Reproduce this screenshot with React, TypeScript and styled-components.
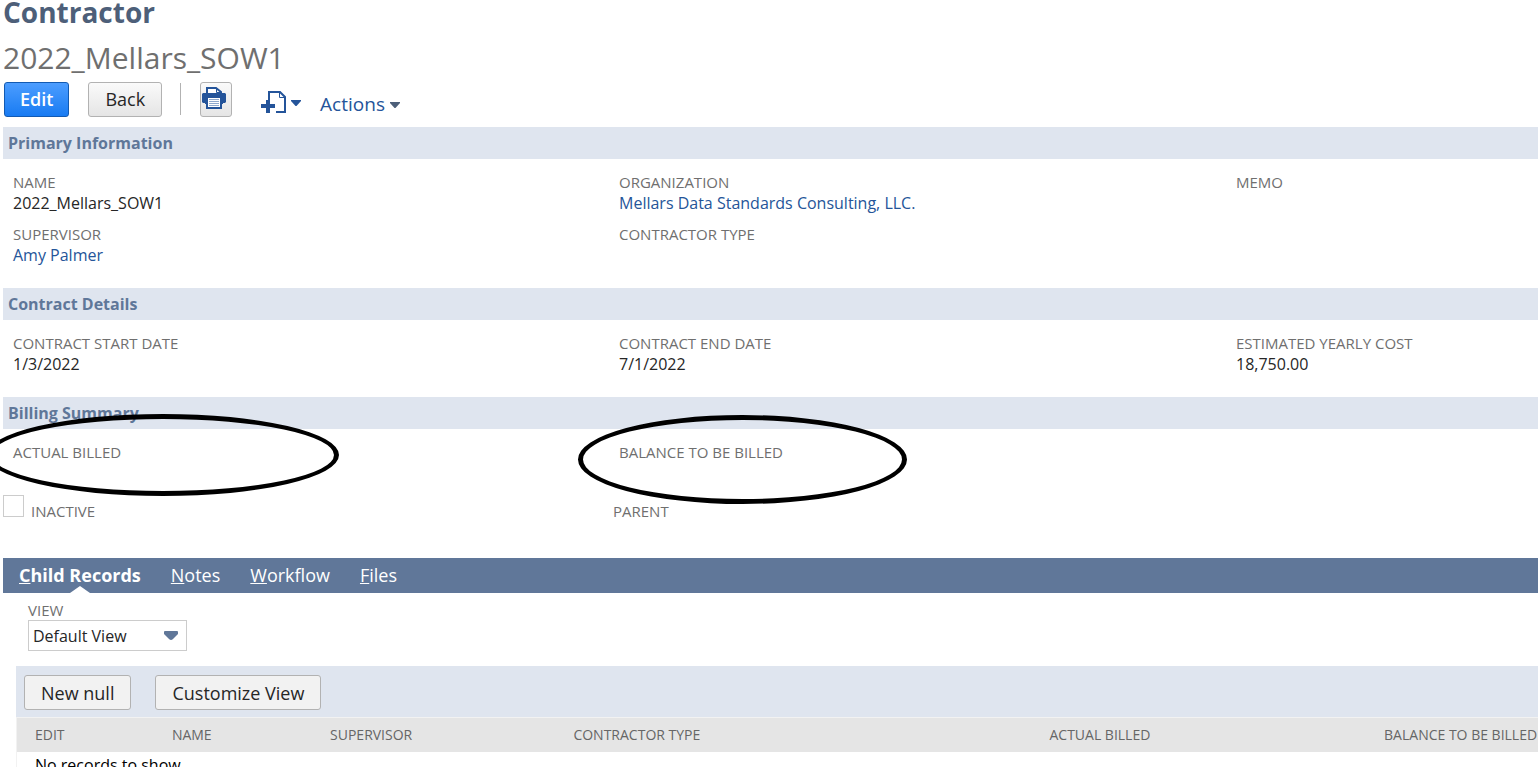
import React from 'react';
import styled, { createGlobalStyle } from 'styled-components';

const GlobalStyle = createGlobalStyle`
  * { box-sizing: border-box; }
  body {
    margin: 0;
    background: #fff;
    color: #262626;
    font-family: 'Open Sans', 'Noto Sans', sans-serif;
    font-size: 16px;
  }
`;

const Page = styled.main`
  height: 100vh;
  overflow: hidden;
  padding-left: 3px;
`;

const RecordType = styled.h1`
  margin: 0;
  font-size: 28px;
  line-height: 24px;
  font-weight: 700;
  color: #4d5f79;
`;

const RecordName = styled.h2`
  margin: 14px 0 4px;
  font-size: 30px;
  line-height: 40px;
  font-weight: 400;
  color: #6f6f6f;
`;

const Toolbar = styled.div`
  display: flex;
  align-items: flex-start;
  height: 45px;
  padding-left: 1px;
`;

const Button = styled.button<{ $primary?: boolean; $flat?: boolean }>`
  height: 35px;
  padding: 0 ${p => (p.$primary ? 15 : 16)}px ${p => (p.$flat ? 0 : 2)}px;
  border: 1px solid ${p => (p.$primary ? '#125ab2' : '#b2b2b2')};
  border-radius: 3px;
  background: ${p =>
    p.$primary
      ? 'linear-gradient(#4c9dff, #187bf2)'
      : p.$flat
        ? '#f2f2f2'
        : 'linear-gradient(#fafafa, #e5e5e5)'};
  color: ${p => (p.$primary ? '#fff' : '#262626')};
  font-family: inherit;
  font-size: 18px;
  line-height: 24px;
  font-weight: ${p => (p.$primary ? 600 : 500)};
  white-space: nowrap;
`;

const BackButton = styled(Button)`
  margin-left: 19px;
`;

const Divider = styled.span`
  width: 1px;
  height: 32px;
  margin: 1px 19px 0 18px;
  background: #b2b2b2;
`;

const PrintButton = styled(Button)`
  display: flex;
  width: 32px;
  padding: 4px 0 0 1px;
`;

const MenuButton = styled.button`
  display: flex;
  align-items: center;
  height: 24px;
  margin: 10px 0 0 19px;
  padding: 0;
  border: 0;
  background: none;
  color: #24549a;
  font-family: inherit;
  font-size: 19px;
  line-height: 24px;
  font-weight: 500;
`;

const NewMenuButton = styled(MenuButton)`
  height: 22px;
  margin: 9px 0 0 29px;
`;

const Caret = styled.svg`
  margin-left: 5px;
`;

const SectionTitle = styled.h3`
  margin: 0;
  padding-left: 5px;
  background: #dfe5ef;
  color: #5f7799;
  font-size: 16px;
  line-height: 32px;
  font-weight: 700;
`;

const Fields = styled.dl<{ $last?: boolean }>`
  display: grid;
  grid-template-columns: 606fr 617fr 302fr;
  margin: 0;
  padding: 13px 0 ${p => (p.$last ? 0 : 12)}px 10px;
`;

const FieldBox = styled.div`
  position: relative;
  min-height: 52px;
`;

const FieldLabel = styled.dt`
  color: #6f6f6f;
  font-size: 15px;
  line-height: 20px;
`;

const FieldValue = styled.dd`
  margin: 0;
  font-size: 16px;
  line-height: 22px;
`;

const Link = styled.a`
  color: #255599;
  text-decoration: none;
`;

const Ring = styled.span<{ $left: number; $top: number; $width: number; $height: number }>`
  position: absolute;
  left: ${p => p.$left}px;
  top: ${p => p.$top}px;
  width: ${p => p.$width}px;
  height: ${p => p.$height}px;
  border: 5px solid #000;
  border-radius: 50%;
  pointer-events: none;
`;

const StatusRow = styled.div`
  display: grid;
  grid-template-columns: 610fr 925fr;
  align-items: start;
  height: 64px;
  padding-top: 1px;
`;

const CheckLabel = styled.label`
  display: flex;
  align-items: flex-start;
  color: #6f6f6f;
  font-size: 15px;
  line-height: 20px;
`;

const CheckText = styled.span`
  margin: 6px 0 0 7px;
`;

const CheckBox = styled.input`
  appearance: none;
  width: 21px;
  height: 22px;
  margin: 0;
  border: 1px solid #ccc;
  background: #fff;
`;

const PlainLabel = styled.span`
  margin-top: 6px;
  color: #6f6f6f;
  font-size: 15px;
  line-height: 20px;
`;

const Tabs = styled.nav`
  display: flex;
  gap: 30px;
  height: 35px;
  padding-left: 16px;
  background: #607799;
`;

const Tab = styled.a<{ $active?: boolean }>`
  position: relative;
  color: #fff;
  font-size: 18px;
  line-height: 35px;
  font-weight: ${p => (p.$active ? 700 : 400)};
  text-decoration: none;

  &::after {
    content: '';
    display: ${p => (p.$active ? 'block' : 'none')};
    position: absolute;
    left: 50%;
    bottom: 0;
    margin-left: -10px;
    border: 10px solid transparent;
    border-top-width: 0;
    border-bottom: 7px solid #fff;
  }
`;

const ViewPicker = styled.div`
  display: flex;
  flex-direction: column;
  align-items: flex-start;
  padding: 7px 0 15px 25px;
`;

const ViewLabel = styled.label`
  color: #6f6f6f;
  font-size: 15px;
  line-height: 20px;
`;

const SelectBox = styled.div`
  display: grid;
  grid-template-columns: 1fr 31px;
  align-items: center;
  width: 159px;
  height: 31px;
  border: 1px solid #ccc;
`;

const Select = styled.select`
  grid-area: 1 / 1 / 2 / 3;
  height: 29px;
  padding: 0 4px;
  appearance: none;
  border: 0;
  background: transparent;
  color: #262626;
  font-family: inherit;
  font-size: 16px;
`;

const SelectArrow = styled.svg`
  grid-area: 1 / 2;
  justify-self: center;
  pointer-events: none;
`;

const List = styled.section`
  margin-left: 13px;
`;

const ListToolbar = styled.div`
  display: flex;
  gap: 24px;
  height: 51px;
  padding: 9px 8px 0;
  background: #dfe5ef;
`;

const Table = styled.table`
  width: 100%;
  table-layout: fixed;
  border-collapse: separate;
  border-spacing: 0;
  border: 1px solid #f2f2f2;
  border-right: 0;
`;

const Th = styled.th`
  height: 34px;
  padding: 0 0 0 18px;
  background: #e5e5e5;
  color: #666;
  font-size: 14px;
  line-height: 20px;
  font-weight: 400;
  text-align: left;
  white-space: nowrap;
`;

const Td = styled.td`
  padding: 3px 18px;
  color: #000;
  font-size: 16px;
  line-height: 20px;
`;

const Col = styled.col<{ $width?: string }>`
  width: ${p => p.$width ?? 'auto'};
`;

const columns = [
  { title: 'EDIT', width: '9%' },
  { title: 'NAME', width: '10.4%' },
  { title: 'SUPERVISOR', width: '16%' },
  { title: 'CONTRACTOR TYPE', width: '31.3%' },
  { title: 'ACTUAL BILLED', width: '22%' },
  { title: 'BALANCE TO BE BILLED' },
];

const tabs = ['Child Records', 'Notes', 'Workflow', 'Files'];

function Field({ label, children, ring }: {
  label: string;
  children?: React.ReactNode;
  ring?: React.ReactNode;
}) {
  return (
    <FieldBox>
      <FieldLabel>{label}</FieldLabel>
      <FieldValue>{children}</FieldValue>
      {ring}
    </FieldBox>
  );
}

function PrintIcon() {
  return (
    <svg width="24" height="22" viewBox="0 0 24 22" aria-hidden="true">
      <path fill="#24549a" d="M1 6h22l1 1v8l-1 1h-2v1H3v-1H1l-1-1V7z" />
      <path fill="#fff" stroke="#24549a" strokeWidth="2" d="M5 7V1h9l5 4v2z" />
      <path fill="none" stroke="#24549a" d="M14.500 1v4.500H19" />
      <path fill="#24549a" d="M3 7h18v4H3zM4 11h16v11H4z" />
      <path fill="#fff" d="M6 11h12v9H6z" />
      <path stroke="#8fa9cd" d="M7 12.500h10M7 14.500h10M7 16.500h10M7 18.500h10" />
    </svg>
  );
}

function NewRecordIcon() {
  return (
    <svg width="25" height="22" viewBox="0 0 25 22" aria-hidden="true">
      <path fill="none" stroke="#24549a" strokeWidth="2" d="M8 10V1h11l5 5v15H15" />
      <path fill="none" stroke="#24549a" d="M18.500 1v5.500H24" />
      <path stroke="#24549a" strokeWidth="4" d="M0 15h14M7 9v13" />
    </svg>
  );
}

function MenuCaret({ color }: { color: string }) {
  return (
    <Caret width="10" height="7" viewBox="0 0 10 7" aria-hidden="true">
      <path fill={color} d="M0 1h10v1L5.500 7h-1L0 2z" />
    </Caret>
  );
}

export default function App() {
  return (
    <>
      <GlobalStyle />
      <Page>
        <RecordType>Contractor</RecordType>
        <RecordName>2022_Mellars_SOW1</RecordName>
        <Toolbar>
          <Button $primary>Edit</Button>
          <BackButton>Back</BackButton>
          <Divider />
          <PrintButton aria-label="Print"><PrintIcon /></PrintButton>
          <NewMenuButton aria-label="New record"><NewRecordIcon /><MenuCaret color="#24549a" /></NewMenuButton>
          <MenuButton>Actions<MenuCaret color="#4d5f79" /></MenuButton>
        </Toolbar>

        <SectionTitle>Primary Information</SectionTitle>
        <Fields>
          <Field label="NAME">2022_Mellars_SOW1</Field>
          <Field label="ORGANIZATION"><Link href="#organization">Mellars Data Standards Consulting, LLC.</Link></Field>
          <Field label="MEMO" />
          <Field label="SUPERVISOR"><Link href="#supervisor">Amy Palmer</Link></Field>
          <Field label="CONTRACTOR TYPE" />
        </Fields>

        <SectionTitle>Contract Details</SectionTitle>
        <Fields>
          <Field label="CONTRACT START DATE">1/3/2022</Field>
          <Field label="CONTRACT END DATE">7/1/2022</Field>
          <Field label="ESTIMATED YEARLY COST">18,750.00</Field>
        </Fields>

        <SectionTitle>Billing Summary</SectionTitle>
        <Fields $last>
          <Field label="ACTUAL BILLED" ring={<Ring $left={-26} $top={-28} $width={352} $height={82} />} />
          <Field label="BALANCE TO BE BILLED" ring={<Ring $left={-41} $top={-27} $width={329} $height={89} />} />
        </Fields>
        <StatusRow>
          <CheckLabel><CheckBox type="checkbox" /><CheckText>INACTIVE</CheckText></CheckLabel>
          <PlainLabel>PARENT</PlainLabel>
        </StatusRow>

        <Tabs>
          {tabs.map((name, i) => (
            <Tab key={name} href="#records" $active={i === 0}><u>{name[0]}</u>{name.slice(1)}</Tab>
          ))}
        </Tabs>
        <ViewPicker>
          <ViewLabel htmlFor="view">VIEW</ViewLabel>
          <SelectBox>
            <Select id="view"><option>Default View</option></Select>
            <SelectArrow width="14" height="9" viewBox="0 0 14 9" aria-hidden="true">
              <path fill="#607799" d="M1 0h12q1 0 1 1v2L9 8q-2 2-4 0L0 3V1q0-1 1-1z" />
            </SelectArrow>
          </SelectBox>
        </ViewPicker>

        <List>
          <ListToolbar>
            <Button $flat>New null</Button>
            <Button $flat>Customize View</Button>
          </ListToolbar>
          <Table>
            <colgroup>{columns.map(c => <Col key={c.title} $width={c.width} />)}</colgroup>
            <thead><tr>{columns.map(c => <Th key={c.title} scope="col">{c.title}</Th>)}</tr></thead>
            <tbody><tr><Td colSpan={6}>No records to show.</Td></tr></tbody>
          </Table>
        </List>
      </Page>
    </>
  );
}
